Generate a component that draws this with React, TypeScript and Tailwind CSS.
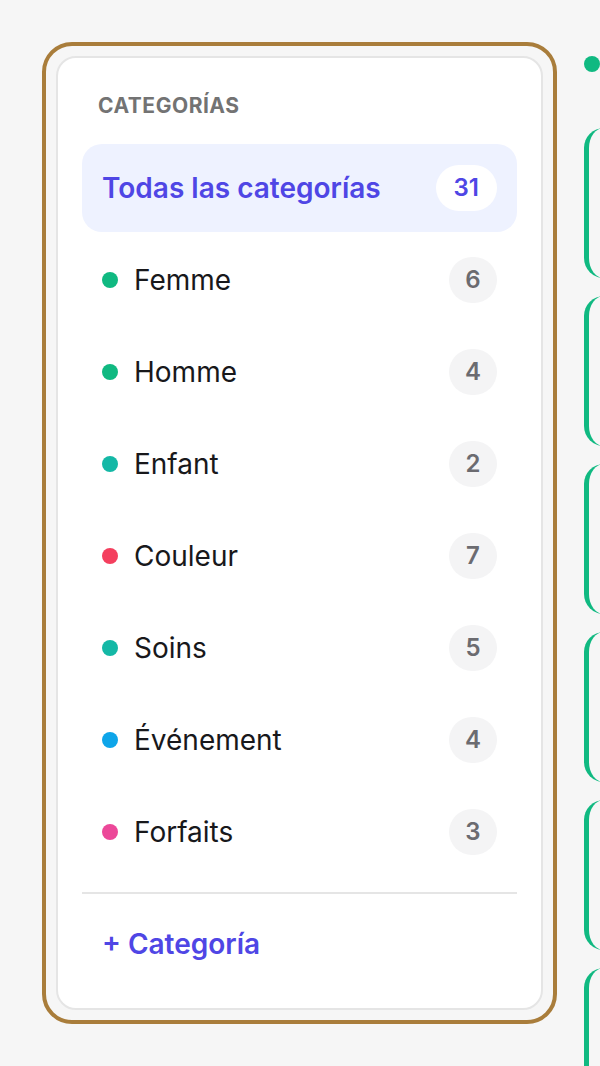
type Category = {
  name: string;
  count: number;
  dot: string;
};

const categories: Category[] = [
  { name: "Femme", count: 6, dot: "bg-[#10b981]" },
  { name: "Homme", count: 4, dot: "bg-[#10b981]" },
  { name: "Enfant", count: 2, dot: "bg-[#14b8a6]" },
  { name: "Couleur", count: 7, dot: "bg-[#f43f5e]" },
  { name: "Soins", count: 5, dot: "bg-[#14b8a6]" },
  { name: "Événement", count: 4, dot: "bg-[#0ea5e9]" },
  { name: "Forfaits", count: 3, dot: "bg-[#ec4899]" },
];

function CategorySidebar() {
  return (
    <div className="w-[515px] shrink-0 rounded-[30px] border-4 border-[#a97d3b] p-[10px]">
      <div className="rounded-[20px] border-2 border-[#e5e5e5] bg-white p-6">
        <div className="px-4 pt-3 pb-[26px] text-[21px] leading-[24px] font-bold tracking-wide text-[#737373] uppercase">
          Categorías
        </div>

        <div className="space-y-1">
          <div className="flex h-[88px] items-center justify-between rounded-[20px] bg-[#eef2ff] px-5">
            <span className="text-[28px] font-semibold text-[#4f46e5]">Todas las categorías</span>
            <span className="flex h-[46px] min-w-[48px] items-center justify-center rounded-full bg-white px-[18px] text-[24px] font-semibold text-[#4f46e5]">
              31
            </span>
          </div>

          {categories.map((c) => (
            <div key={c.name} className="flex h-[88px] items-center justify-between rounded-[20px] px-5">
              <div className="flex items-center gap-4">
                <span className={`h-4 w-4 rounded-full ${c.dot}`} />
                <span className="text-[28px] text-[#18181b]">{c.name}</span>
              </div>
              <span className="flex h-[46px] min-w-[48px] items-center justify-center rounded-full bg-[#f4f4f5] px-4 text-[24px] font-semibold text-[#6b6b70]">
                {c.count}
              </span>
            </div>
          ))}
        </div>

        <div className="mt-4 h-[2px] bg-[#e5e5e5]" />

        <button className="mt-[10px] flex w-full px-5 py-5 text-[28px] leading-[40px] font-semibold text-[#4f46e5]">
          + Categoría
        </button>
      </div>
    </div>
  );
}

function ServiceColumn() {
  return (
    <div className="flex shrink-0 flex-col pt-[14px]">
      <span className="h-4 w-4 shrink-0 rounded-full bg-[#10b981]" />
      <div className="mt-[56px] flex shrink-0 flex-col gap-[18px]">
        {[0, 1, 2, 3, 4, 5].map((i) => (
          <div
            key={i}
            className="h-[150px] w-[360px] shrink-0 rounded-[20px] border-l-[5px] border-[#10b981] bg-[#f6f6f6]"
          />
        ))}
      </div>
    </div>
  );
}

export default function App() {
  return (
    <div
      className="flex h-[1066px] w-full items-start gap-[27px] overflow-hidden bg-[#f6f6f6] pt-[42px] pl-[42px]"
      style={{ fontFamily: "Inter, 'Noto Sans', sans-serif" }}
    >
      <CategorySidebar />
      <ServiceColumn />
    </div>
  );
}
